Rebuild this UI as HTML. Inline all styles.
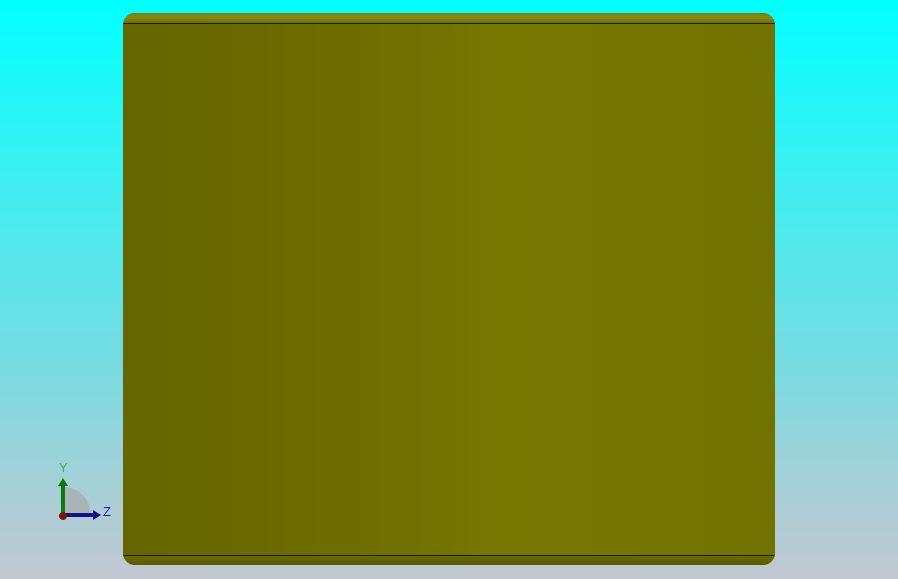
<!DOCTYPE html>
<html><head><meta charset="utf-8"><style>
html,body{margin:0;padding:0;width:898px;height:579px;overflow:hidden}
body{background:linear-gradient(to bottom,#00ffff 0%,#3ef0f2 30%,#70dde2 60%,#a8cfd6 85%,#c2c8d2 100%);position:relative;font-family:"Liberation Sans",sans-serif}
.box{position:absolute;left:123px;top:13px;width:652px;height:552px;border-radius:12px;overflow:hidden;
background:linear-gradient(to right,#666600 0%,#6a6a00 20%,#717100 45%,#777700 58%,#757500 75%,#727200 100%)}
.top{position:absolute;left:0;right:0;top:0;height:10px;background:linear-gradient(to bottom,#7a7a0a,#8a8a10 40%,#707000);border-bottom:1px solid #1a1a00}
.bot{position:absolute;left:0;right:0;bottom:0;height:9px;background:linear-gradient(to bottom,#6a6a00,#5a5a00);border-top:1px solid #1a1a00}
</style></head><body>
<div class="box"><div class="top"></div><div class="bot"></div></div>
<svg style="position:absolute;left:50px;top:455px" width="70" height="70">
<path d="M13 60 L13 32 A28 28 0 0 1 41 60 Z" fill="#a8b4b8"/>
<line x1="13" y1="60" x2="13" y2="29" stroke="#0a7a0a" stroke-width="4"/>
<polygon points="8,31 18,31 13,23" fill="#0a7a0a"/>
<line x1="13" y1="60" x2="44" y2="60" stroke="#101080" stroke-width="4"/>
<polygon points="43,55 43,65 51,60" fill="#101080"/>
<circle cx="13" cy="61" r="4" fill="#801010"/>
<text x="9" y="17" font-size="13" fill="#20c040" font-family="Liberation Sans">Y</text>
<text x="53" y="61" font-size="13" fill="#1010d0" font-family="Liberation Sans">Z</text>
</svg>
</body></html>
